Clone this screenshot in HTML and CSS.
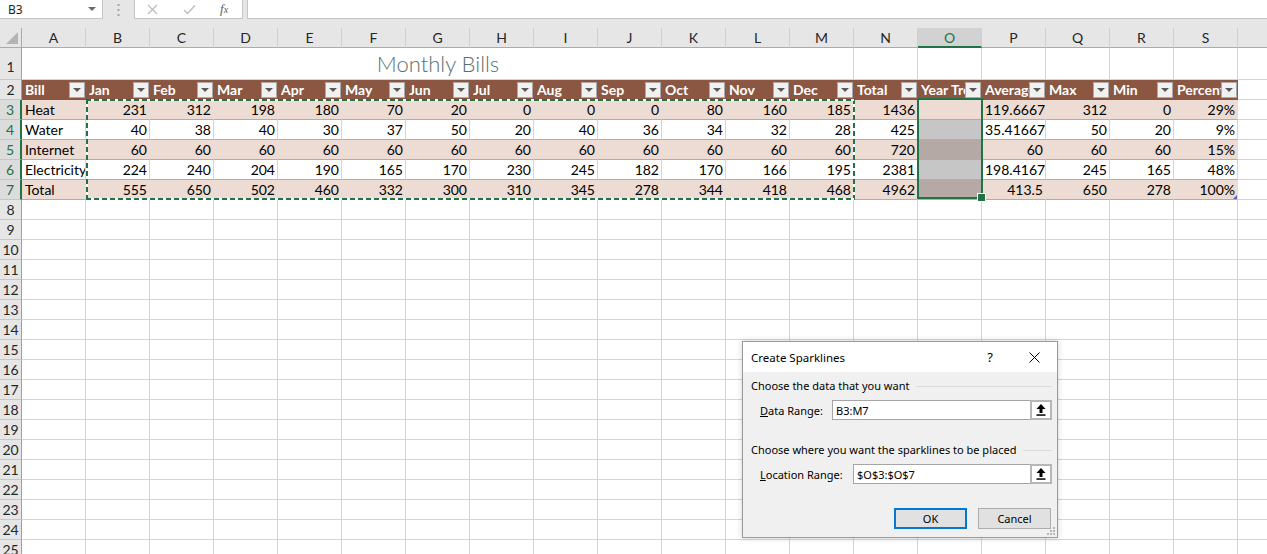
FILE: index.html
```html
<!DOCTYPE html>
<html lang="en">
<head>
<meta charset="utf-8">
<title>Monthly Bills</title>
<link rel="stylesheet" href="styles.css">
</head>
<body>
<div class="app">
  <div class="topbar">
    <div class="namebox"><span>B3</span><span class="nb-arrow"></span></div>
    <div class="vdots">
      <svg width="3" height="12" viewBox="0 0 3 12"><rect x="0.5" y="0" width="2" height="2" fill="#a6a6a6"/><rect x="0.5" y="5" width="2" height="2" fill="#a6a6a6"/><rect x="0.5" y="10" width="2" height="2" fill="#a6a6a6"/></svg>
    </div>
    <div class="fxbox">
      <svg class="ic-x" width="11" height="11" viewBox="0 0 11 11"><path d="M1 1 L10 10 M10 1 L1 10" stroke="#bcbcbc" stroke-width="1.3" fill="none"/></svg>
      <svg class="ic-ok" width="13" height="11" viewBox="0 0 13 11"><path d="M1 6 L4.5 9.5 L12 1.5" stroke="#bcbcbc" stroke-width="1.3" fill="none"/></svg>
      <span class="fx"><i>f</i><i class="fxx">x</i></span>
    </div>
    <div class="formula"></div>
  </div>

  <div class="colheads">
    <div class="corner"></div>
    <div class="ch">A</div><div class="ch">B</div><div class="ch">C</div><div class="ch">D</div><div class="ch">E</div><div class="ch">F</div><div class="ch">G</div><div class="ch">H</div><div class="ch">I</div><div class="ch">J</div><div class="ch">K</div><div class="ch">L</div><div class="ch">M</div><div class="ch">N</div><div class="ch on">O</div><div class="ch">P</div><div class="ch">Q</div><div class="ch">R</div><div class="ch">S</div><div class="ch"></div>
  </div>

  <div class="row r1">
    <div class="rh">1</div>
    <div class="c title">Monthly Bills</div>
    <div class="c"></div><div class="c"></div><div class="c"></div><div class="c"></div><div class="c"></div><div class="c"></div><div class="c"></div>
  </div>

  <div class="row">
    <div class="rh">2</div>
    <div class="th"><span>Bill</span><b class="fb"></b></div>
    <div class="th"><span>Jan</span><b class="fb"></b></div>
    <div class="th"><span>Feb</span><b class="fb"></b></div>
    <div class="th"><span>Mar</span><b class="fb"></b></div>
    <div class="th"><span>Apr</span><b class="fb"></b></div>
    <div class="th"><span>May</span><b class="fb"></b></div>
    <div class="th"><span>Jun</span><b class="fb"></b></div>
    <div class="th"><span>Jul</span><b class="fb"></b></div>
    <div class="th"><span>Aug</span><b class="fb"></b></div>
    <div class="th"><span>Sep</span><b class="fb"></b></div>
    <div class="th"><span>Oct</span><b class="fb"></b></div>
    <div class="th"><span>Nov</span><b class="fb"></b></div>
    <div class="th"><span>Dec</span><b class="fb"></b></div>
    <div class="th"><span>Total</span><b class="fb"></b></div>
    <div class="th"><span>Year Trend</span><b class="fb"></b></div>
    <div class="th"><span>Average</span><b class="fb"></b></div>
    <div class="th"><span>Max</span><b class="fb"></b></div>
    <div class="th"><span>Min</span><b class="fb"></b></div>
    <div class="th"><span>Percent</span><b class="fb"></b></div>
    <div class="c"></div>
  </div>

  <div class="tbody">
    <div class="row band">
      <div class="rh hl">3</div>
      <div class="c tb">Heat</div>
      <div class="c tb n">231</div><div class="c tb n">312</div><div class="c tb n">198</div><div class="c tb n">180</div><div class="c tb n">70</div><div class="c tb n">20</div><div class="c tb n">0</div><div class="c tb n">0</div><div class="c tb n">0</div><div class="c tb n">80</div><div class="c tb n">160</div><div class="c tb n">185</div>
      <div class="c tb n">1436</div>
      <div class="c tb"></div>
      <div class="c tb n">119.6667</div><div class="c tb n">312</div><div class="c tb n">0</div><div class="c tb n">29%</div>
      <div class="c"></div>
    </div>
    <div class="row">
      <div class="rh hl">4</div>
      <div class="c tb">Water</div>
      <div class="c tb n">40</div><div class="c tb n">38</div><div class="c tb n">40</div><div class="c tb n">30</div><div class="c tb n">37</div><div class="c tb n">50</div><div class="c tb n">20</div><div class="c tb n">40</div><div class="c tb n">36</div><div class="c tb n">34</div><div class="c tb n">32</div><div class="c tb n">28</div>
      <div class="c tb n">425</div>
      <div class="c tb sel"></div>
      <div class="c tb n">35.41667</div><div class="c tb n">50</div><div class="c tb n">20</div><div class="c tb n">9%</div>
      <div class="c"></div>
    </div>
    <div class="row band">
      <div class="rh hl">5</div>
      <div class="c tb">Internet</div>
      <div class="c tb n">60</div><div class="c tb n">60</div><div class="c tb n">60</div><div class="c tb n">60</div><div class="c tb n">60</div><div class="c tb n">60</div><div class="c tb n">60</div><div class="c tb n">60</div><div class="c tb n">60</div><div class="c tb n">60</div><div class="c tb n">60</div><div class="c tb n">60</div>
      <div class="c tb n">720</div>
      <div class="c tb sel"></div>
      <div class="c tb n">60</div><div class="c tb n">60</div><div class="c tb n">60</div><div class="c tb n">15%</div>
      <div class="c"></div>
    </div>
    <div class="row">
      <div class="rh hl">6</div>
      <div class="c tb">Electricity</div>
      <div class="c tb n">224</div><div class="c tb n">240</div><div class="c tb n">204</div><div class="c tb n">190</div><div class="c tb n">165</div><div class="c tb n">170</div><div class="c tb n">230</div><div class="c tb n">245</div><div class="c tb n">182</div><div class="c tb n">170</div><div class="c tb n">166</div><div class="c tb n">195</div>
      <div class="c tb n">2381</div>
      <div class="c tb sel"></div>
      <div class="c tb n">198.4167</div><div class="c tb n">245</div><div class="c tb n">165</div><div class="c tb n">48%</div>
      <div class="c"></div>
    </div>
    <div class="row band">
      <div class="rh hl">7</div>
      <div class="c tb">Total</div>
      <div class="c tb n">555</div><div class="c tb n">650</div><div class="c tb n">502</div><div class="c tb n">460</div><div class="c tb n">332</div><div class="c tb n">300</div><div class="c tb n">310</div><div class="c tb n">345</div><div class="c tb n">278</div><div class="c tb n">344</div><div class="c tb n">418</div><div class="c tb n">468</div>
      <div class="c tb n">4962</div>
      <div class="c tb sel"></div>
      <div class="c tb n">413.5</div><div class="c tb n">650</div><div class="c tb n">278</div><div class="c tb n corner-mark">100%</div>
      <div class="c"></div>
    </div>
    <div class="ants"></div>
    <div class="selbox"></div>
  </div>

  <div class="empty">
    <div class="rhcol">
      <div class="rh">8</div><div class="rh">9</div><div class="rh">10</div><div class="rh">11</div><div class="rh">12</div><div class="rh">13</div><div class="rh">14</div><div class="rh">15</div><div class="rh">16</div><div class="rh">17</div><div class="rh">18</div><div class="rh">19</div><div class="rh">20</div><div class="rh">21</div><div class="rh">22</div><div class="rh">23</div><div class="rh">24</div><div class="rh">25</div>
    </div>
    <div class="gridfill"></div>
  </div>

  <div class="dialog">
    <div class="dlg-title">
      <span class="dlg-name">Create Sparklines</span>
      <span class="dlg-help">?</span>
      <svg class="dlg-close" width="11" height="11" viewBox="0 0 11 11"><path d="M0.5 0.5 L10.5 10.5 M10.5 0.5 L0.5 10.5" stroke="#000" stroke-width="1" fill="none"/></svg>
    </div>
    <div class="dlg-body">
      <div class="grp"><span>Choose the data that you want</span><i class="rule"></i></div>
      <div class="field">
        <label class="lbl lbl-data"><u>D</u>ata Range:</label>
        <div class="inp"><span class="val">B3:M7</span><span class="pick"><svg width="10" height="12" viewBox="0 0 10 12"><path d="M5 0 L9.5 5 L6.5 5 L6.5 9 L3.5 9 L3.5 5 L0.5 5 Z" fill="#000"/><rect x="0.5" y="10.3" width="9" height="1.5" fill="#000"/></svg></span></div>
      </div>
      <div class="grp g2"><span>Choose where you want the sparklines to be placed</span><i class="rule"></i></div>
      <div class="field">
        <label class="lbl lbl-loc"><u>L</u>ocation Range:</label>
        <div class="inp"><span class="val">$O$3:$O$7</span><span class="pick"><svg width="10" height="12" viewBox="0 0 10 12"><path d="M5 0 L9.5 5 L6.5 5 L6.5 9 L3.5 9 L3.5 5 L0.5 5 Z" fill="#000"/><rect x="0.5" y="10.3" width="9" height="1.5" fill="#000"/></svg></span></div>
      </div>
      <div class="btns">
        <button class="btn ok">OK</button>
        <button class="btn">Cancel</button>
      </div>
    </div>
    <svg class="grip" width="8" height="8" viewBox="0 0 8 8"><rect x="6" y="0" width="2" height="2" fill="#b8b8b8"/><rect x="3" y="3" width="2" height="2" fill="#b8b8b8"/><rect x="6" y="3" width="2" height="2" fill="#b8b8b8"/><rect x="0" y="6" width="2" height="2" fill="#b8b8b8"/><rect x="3" y="6" width="2" height="2" fill="#b8b8b8"/><rect x="6" y="6" width="2" height="2" fill="#b8b8b8"/></svg>
  </div>
</div>
</body>
</html>
```

FILE: styles.css
```css
* { box-sizing: border-box; }
html, body { margin: 0; padding: 0; overflow: hidden; background: #fff; }
body { font-family: Lato, "Liberation Sans", sans-serif; font-size: 14px; color: #000; }

.app { position: relative; width: 1267px; height: 554px; overflow: hidden; }

/* formula bar */
.topbar { height: 28px; background: #e6e6e6; display: flex; align-items: flex-start; }
.namebox {
  flex: none; width: 103px; height: 19px; background: #fff;
  border-right: 1px solid #c6c6c6; border-bottom: 1px solid #c6c6c6;
  display: flex; align-items: center; padding-left: 8px;
  font-family: "Noto Sans", sans-serif; font-size: 12px; color: #222;
}
.nb-arrow {
  margin-left: auto; margin-right: 6px; width: 0; height: 0;
  border-left: 4px solid transparent; border-right: 4px solid transparent; border-top: 4px solid #6a6a6a;
}
.vdots { flex: none; width: 31px; height: 19px; display: flex; justify-content: center; align-items: center; }
.fxbox {
  flex: none; width: 109px; height: 19px; background: #fff;
  border-right: 1px solid #c6c6c6; border-bottom: 1px solid #c6c6c6; border-left: 1px solid #c6c6c6;
  display: flex; align-items: center; padding-left: 12px;
}
.ic-ok { margin-left: 25px; }
.fx { margin-left: 24px; font-family: "Liberation Serif", serif; color: #606060; font-size: 13px; }
.fxx { font-size: 10px; }
.formula { flex: 1; height: 19px; margin-left: 4px; background: #fff; border-left: 1px solid #c6c6c6; border-bottom: 1px solid #c6c6c6; }

/* column headers */
.colheads { display: flex; height: 20px; background: #e6e6e6; }
.corner { flex: none; width: 22px; height: 20px; border-right: 1px solid #ababab; border-bottom: 1px solid #ababab; position: relative; }
.corner::after {
  content: ""; position: absolute; right: 3px; bottom: 3px; width: 0; height: 0;
  border-left: 12px solid transparent; border-bottom: 12px solid #b4b4b4;
}
.ch {
  flex: none; width: 64px; height: 20px; text-align: center; line-height: 20px;
  border-right: 1px solid #d0d0d0; border-bottom: 1px solid #ababab; color: #262626;
}
.ch.on { background: #d2d2d2; color: #217346; border-bottom: 2px solid #217346; }

/* rows */
.row { display: flex; height: 20px; }
.r1 { height: 32px; }
.rh {
  flex: none; width: 22px; height: 20px; background: #e6e6e6; color: #262626;
  border-right: 1px solid #9f9f9f; border-bottom: 1px solid #c6c6c6;
  text-align: center; line-height: 19px;
}
.r1 .rh { height: 32px; line-height: 38px; }
.rh.hl { background: #dcdcdc; color: #217346; border-right: 2px solid #217346; }

.c {
  flex: none; width: 64px; height: 100%; padding: 0 2px 0 3px;
  border-right: 1px solid #d4d4d4; border-bottom: 1px solid #d4d4d4;
  line-height: 20px; white-space: nowrap; overflow: hidden;
}
.n { text-align: right; }
.title {
  width: 832px; text-align: center; font-weight: 300; font-size: 22px;
  color: #587272; line-height: 31px;
}

/* table header */
.th {
  flex: none; width: 64px; height: 20px; background: #8b5742; color: #fff; font-weight: 700;
  display: flex; align-items: center; padding-left: 3px;
}
.th span { flex: 1; min-width: 0; overflow: hidden; white-space: nowrap; line-height: 20px; }
.fb {
  flex: none; width: 16px; height: 16px; margin-right: 1px;
  background: #f1f1f1; border: 1px solid #a9a9a9;
  display: flex; align-items: center; justify-content: center;
}
.fb::after {
  content: ""; width: 0; height: 0;
  border-left: 4px solid transparent; border-right: 4px solid transparent; border-top: 4px solid #5a5a5a;
}

/* table body */
.tbody { position: relative; }
.tb { border-bottom-color: #c9a594; }
.band .tb { background: #eddcd3; border-right-color: #eddcd3; }
.sel { background: #c6c6c6; border-right-color: #c6c6c6; }
.band .sel { background: #b4a9a4; border-right-color: #b4a9a4; }
.corner-mark { position: relative; }
.corner-mark::after {
  content: ""; position: absolute; right: 0; bottom: 0; width: 0; height: 0;
  border-left: 4px solid transparent; border-bottom: 4px solid #5b5fc7;
}

.ants {
  position: absolute; left: 86px; top: -1px; width: 769px; height: 101px; pointer-events: none;
  background:
    repeating-linear-gradient(90deg, #217346 0 5px, #fff 5px 8px) left top / 100% 2px no-repeat,
    repeating-linear-gradient(90deg, #217346 0 5px, #fff 5px 8px) left bottom / 100% 2px no-repeat,
    repeating-linear-gradient(180deg, #217346 0 5px, #fff 5px 8px) left top / 2px 100% no-repeat,
    repeating-linear-gradient(180deg, #217346 0 5px, #fff 5px 8px) right top / 2px 100% no-repeat;
}
.selbox {
  position: absolute; left: 917px; top: -2px; width: 66px; height: 101px;
  border: 2px solid #217346; pointer-events: none;
}
.selbox::after {
  content: ""; position: absolute; right: -5px; bottom: -5px; width: 7px; height: 7px;
  background: #217346; border: 1px solid #fff;
}

/* empty grid */
.empty { display: flex; }
.rhcol { flex: none; display: flex; flex-direction: column; }
.gridfill {
  flex: 1; height: 360px;
  background-image:
    linear-gradient(to right, transparent 63px, #d4d4d4 63px),
    linear-gradient(to bottom, transparent 19px, #d4d4d4 19px);
  background-size: 64px 20px;
}

/* dialog */
.dialog {
  position: absolute; left: 742px; top: 341px; width: 316px; height: 197px;
  background: #f0f0f0; border: 1px solid #9a9a9a;
  box-shadow: 0 0 6px rgba(0, 0, 0, 0.18);
  font-family: "Noto Sans", sans-serif; font-size: 11px; color: #000;
}
.dlg-title { height: 30px; background: #fff; display: flex; align-items: center; padding-left: 8px; }
.dlg-name { flex: 1; font-size: 11.5px; }
.dlg-help { font-size: 13px; }
.dlg-close { margin-left: 36px; margin-right: 17px; }
.dlg-body { padding: 7px 5px 0 8px; }
.grp { display: flex; align-items: center; height: 14px; line-height: 14px; }
.grp.g2 { margin-top: 23px; }
.rule { flex: 1; height: 1px; background: #dcdcdc; margin-left: 7px; }
.field { display: flex; align-items: center; height: 20px; margin-top: 7px; padding-left: 9px; }
.lbl { flex: none; }
.lbl-data { width: 72px; }
.lbl-loc { width: 93px; }
.inp {
  flex: 1; height: 20px; background: #fff; border: 1px solid #a5a5a5;
  display: flex; align-items: center;
}
.val { flex: 1; padding-left: 3px; }
.pick {
  flex: none; width: 22px; height: 20px; margin: -1px -1px -1px 0;
  border: 2px solid #b7b7b7; background: #fff;
  display: flex; align-items: center; justify-content: center;
}
.btns { display: flex; justify-content: flex-end; gap: 11px; margin-top: 24px; padding-right: 1px; }
.btn {
  width: 73px; height: 21px; padding: 0; margin: 0;
  background: #e1e1e1; border: 1px solid #adadad;
  font-family: "Noto Sans", sans-serif; font-size: 11px; color: #000;
}
.btn.ok { border: 2px solid #0078d7; }
.grip { position: absolute; right: 2px; bottom: 2px; }
```
